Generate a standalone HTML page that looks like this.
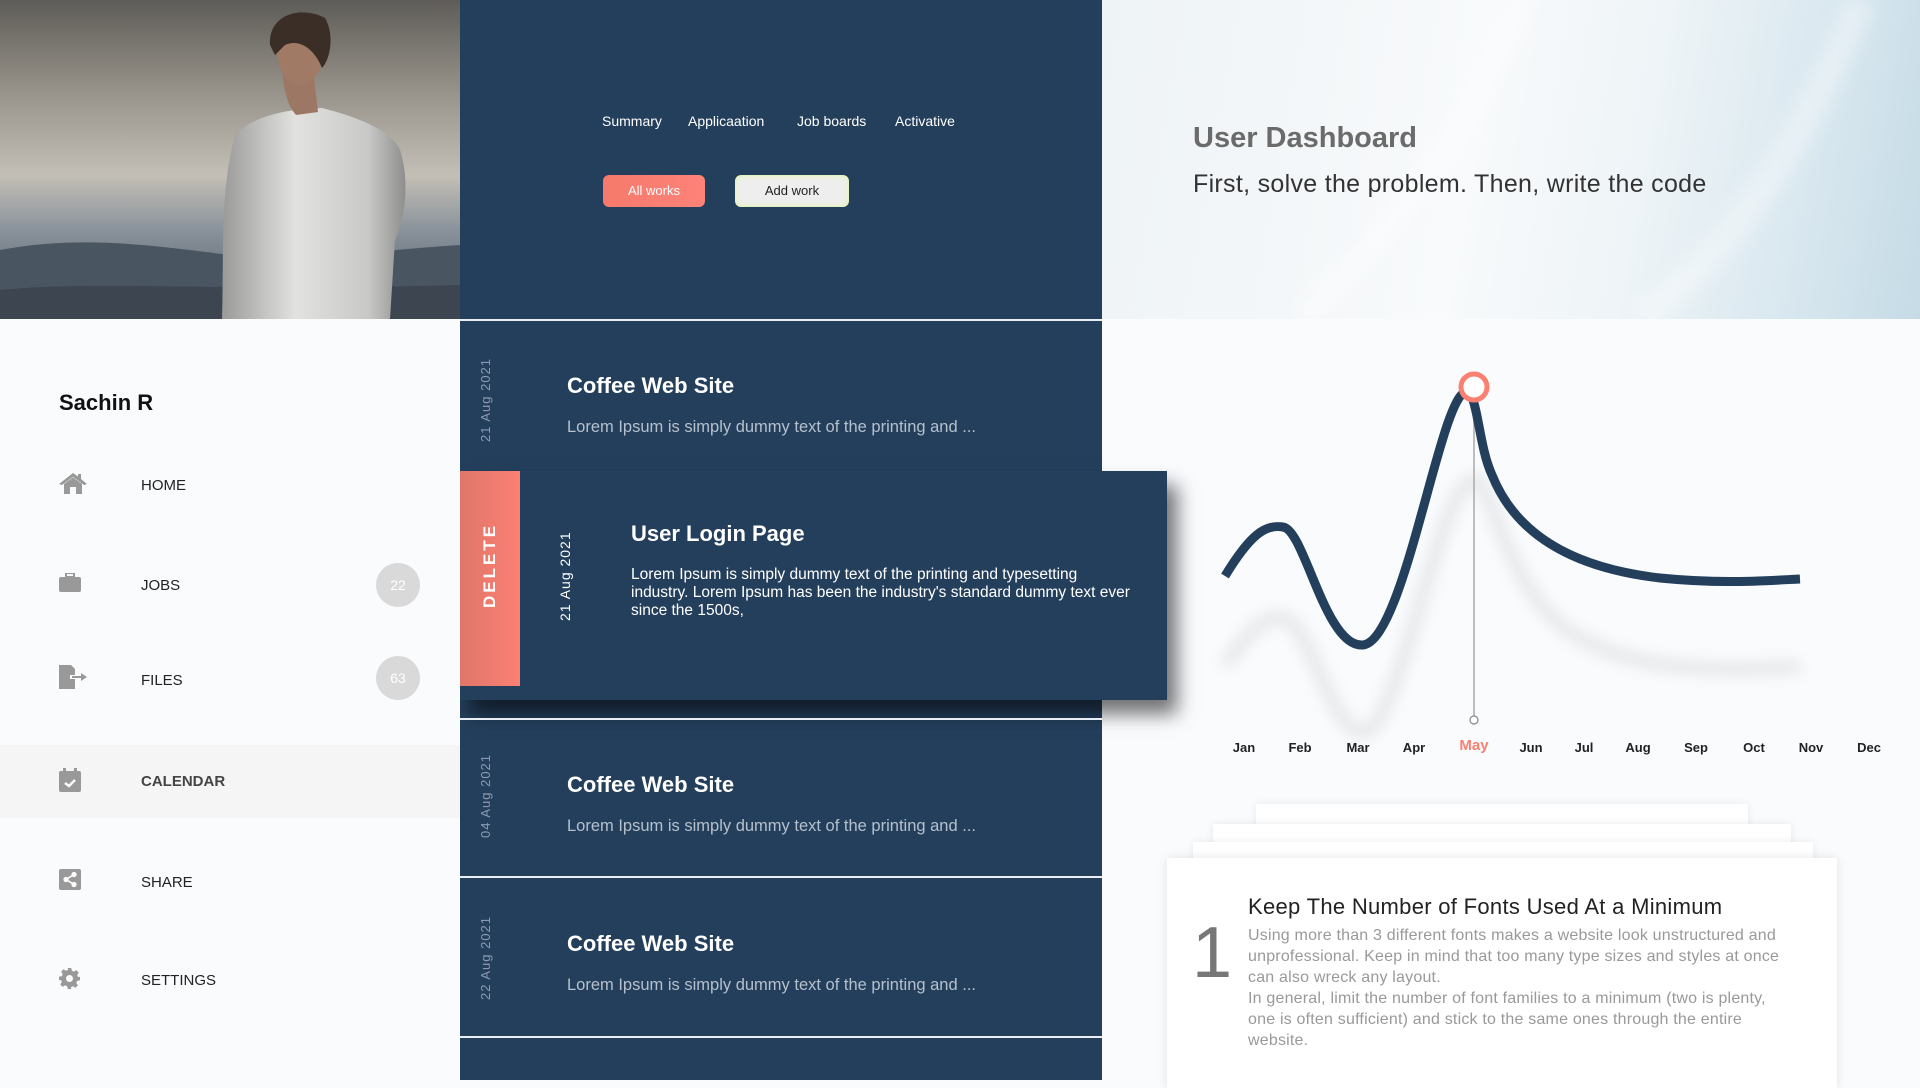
<!DOCTYPE html>
<html><head><meta charset="utf-8"><style>
*{margin:0;padding:0;box-sizing:border-box}
body{width:1920px;height:1080px;overflow:hidden;position:relative;font-family:"Liberation Sans",sans-serif;background:#f9fbfd}
.abs{position:absolute}
.dark{left:460px;top:0;width:642px;height:1080px;background:#243f5c}
.nav{top:113px;font-size:14px;color:#fff}
.sep{left:460px;width:642px;height:2px;background:#e8eef4}
.date{transform:rotate(-90deg);transform-origin:left top;color:#8a9ab0;font-size:13px;letter-spacing:1px;white-space:nowrap}
.title{color:#fff;font-weight:bold;font-size:22px}
.desc{color:#b5c0cc;font-size:16.5px}
.menu{left:141px;font-size:15px;color:#222}
.ic{left:59px}
.badge{width:44px;height:44px;border-radius:50%;background:#d9d9d9;color:#fff;font-size:14px;text-align:center;line-height:44px;left:376px}
.mon{top:740px;font-size:13px;font-weight:bold;color:#222;transform:translateX(-50%)}
</style></head><body>
<!-- photo -->
<svg class="abs" style="left:0;top:0" width="460" height="319" viewBox="0 0 460 319">
<defs><linearGradient id="sky" x1="0" y1="0" x2="0" y2="1"><stop offset="0" stop-color="#5e5c58"/><stop offset=".3" stop-color="#9a958c"/><stop offset=".55" stop-color="#c4bfb6"/><stop offset=".72" stop-color="#8a939b"/><stop offset="1" stop-color="#4d5866"/></linearGradient>
<linearGradient id="sh" x1="0" y1="0" x2="1" y2="0"><stop offset="0" stop-color="#9a9a98"/><stop offset=".4" stop-color="#e2e2e0"/><stop offset=".8" stop-color="#c8c8c6"/><stop offset="1" stop-color="#8e8e8c"/></linearGradient></defs>
<rect width="460" height="319" fill="url(#sky)"/>
<path d="M0 250 C80 235 150 245 230 255 C300 262 380 250 460 245 L460 319 L0 319Z" fill="#4a5562"/>
<path d="M0 290 C100 280 200 292 460 285 L460 319 L0 319Z" fill="#3c4550"/>
<path d="M235 135 C250 118 280 112 295 110 L322 108 C350 115 390 128 400 150 C410 180 405 220 395 240 L390 319 L222 319 C224 250 220 190 235 135Z" fill="url(#sh)"/>
<path d="M282 70 C284 92 288 106 296 115 L318 112 L314 78Z" fill="#9c7864"/>
<ellipse cx="300" cy="55" rx="22" ry="30" fill="#a07a64"/>
<path d="M270 45 C268 15 300 5 325 18 C335 35 330 60 322 68 C315 50 300 38 285 45 L275 55Z" fill="#3a2e26"/>
</svg>
<!-- dark panel -->
<div class="abs dark"></div>
<div class="abs nav" style="left:602px">Summary</div>
<div class="abs nav" style="left:688px">Applicaation</div>
<div class="abs nav" style="left:797px">Job boards</div>
<div class="abs nav" style="left:895px">Activative</div>
<div class="abs" style="left:603px;top:175px;width:102px;height:32px;border-radius:6px;background:linear-gradient(90deg,#f57a6c,#fe8278);color:#fff;font-size:13px;text-align:center;line-height:32px">All works</div>
<div class="abs" style="left:735px;top:175px;width:114px;height:32px;border-radius:6px;background:#eeeeee;box-shadow:inset 0 0 6px #e2f5b5;border:1px solid #e4f3c4;color:#222;font-size:13px;text-align:center;line-height:30px">Add work</div>
<div class="abs sep" style="top:319px"></div>
<!-- item1 -->
<div class="abs date" style="left:478px;top:442px">21 Aug 2021</div>
<div class="abs title" style="left:567px;top:373px">Coffee Web Site</div>
<div class="abs desc" style="left:567px;top:418px">Lorem Ipsum is simply dummy text of the printing and ...</div>
<!-- expanded -->
<div class="abs" style="left:460px;top:471px;width:707px;height:229px;box-shadow:10px 14px 18px rgba(0,0,0,.55)"></div>
<div class="abs" style="left:460px;top:471px;width:60px;height:215px;background:linear-gradient(90deg,#e0766a,#fb8073)"></div>
<div class="abs" style="left:480px;top:608px;transform:rotate(-90deg);transform-origin:left top;color:#fff;font-size:17px;letter-spacing:3px;font-weight:bold">DELETE</div>
<div class="abs" style="left:520px;top:471px;width:647px;height:229px;background:#243f5c"></div>
<div class="abs date" style="left:557px;top:621px;color:#fff;font-size:14px">21 Aug 2021</div>
<div class="abs title" style="left:631px;top:521px">User Login Page</div>
<div class="abs" style="left:631px;top:566px;width:505px;color:#fff;font-size:15.5px;line-height:18px">Lorem Ipsum is simply dummy text of the printing and typesetting industry. Lorem Ipsum has been the industry's standard dummy text ever since the 1500s,</div>
<div class="abs sep" style="top:718px"></div>
<!-- item3 -->
<div class="abs date" style="left:478px;top:838px">04 Aug 2021</div>
<div class="abs title" style="left:567px;top:772px">Coffee Web Site</div>
<div class="abs desc" style="left:567px;top:817px">Lorem Ipsum is simply dummy text of the printing and ...</div>
<div class="abs sep" style="top:876px"></div>
<!-- item4 -->
<div class="abs date" style="left:478px;top:1000px">22 Aug 2021</div>
<div class="abs title" style="left:567px;top:931px">Coffee Web Site</div>
<div class="abs desc" style="left:567px;top:976px">Lorem Ipsum is simply dummy text of the printing and ...</div>
<div class="abs sep" style="top:1036px"></div>
<!-- sidebar -->
<div class="abs" style="left:0;top:319px;width:460px;height:761px;background:#fafbfd"></div>
<div class="abs" style="left:0;top:745px;width:460px;height:73px;background:#f5f5f5"></div>
<div class="abs" style="left:59px;top:390px;font-size:22px;font-weight:bold;color:#111">Sachin R</div>
<svg class="abs ic" style="top:472px" width="28" height="22" viewBox="0 0 28 22"><path d="M14 1 L0 12 L3 13 L14 5 L25 13 L28 12 L22 7 V2 H19 V4.5Z" fill="#999"/><path d="M5 12 L14 5.5 L23 12 V22 H17 V15 H11 V22 H5Z" fill="#999"/></svg>
<div class="abs menu" style="top:477px">HOME</div>
<svg class="abs ic" style="top:573px" width="22" height="20" viewBox="0 0 22 20"><rect x="7" y="0" width="8" height="4" fill="none" stroke="#999" stroke-width="2"/><rect x="0" y="4" width="22" height="15" rx="2" fill="#999"/></svg>
<div class="abs menu" style="top:577px">JOBS</div>
<div class="abs badge" style="top:563px">22</div>
<svg class="abs ic" style="top:665px" width="28" height="24" viewBox="0 0 28 24"><path d="M0 0 H12 L16 4 V10 H11 V14 H16 V24 H0Z" fill="#999"/><path d="M13 11 H22 V8 L28 12 L22 16 V13 H13Z" fill="#999"/></svg>
<div class="abs menu" style="top:672px">FILES</div>
<div class="abs badge" style="top:656px">63</div>
<svg class="abs ic" style="top:768px" width="22" height="24" viewBox="0 0 22 24"><rect x="0" y="3" width="22" height="21" rx="2" fill="#999"/><rect x="4" y="0" width="3" height="5" fill="#999"/><rect x="15" y="0" width="3" height="5" fill="#999"/><path d="M6 15 L10 18 L16 12" stroke="#fafbfd" stroke-width="2.5" fill="none"/></svg>
<div class="abs menu" style="top:773px;font-weight:bold;color:#444">CALENDAR</div>
<svg class="abs ic" style="top:869px" width="22" height="21" viewBox="0 0 22 21"><rect width="22" height="21" rx="2" fill="#999"/><circle cx="15" cy="5.5" r="2.6" fill="#fff"/><circle cx="15" cy="15.5" r="2.6" fill="#fff"/><circle cx="7" cy="10.5" r="2.6" fill="#fff"/><path d="M15 5.5 L7 10.5 L15 15.5" stroke="#fff" stroke-width="1.6" fill="none"/></svg>
<div class="abs menu" style="top:874px">SHARE</div>
<svg class="abs ic" style="top:968px" width="21" height="21" viewBox="0 0 24 24"><path d="M10 0h4l.7 3.2 2.3 1 2.8-1.8 2.8 2.8-1.8 2.8 1 2.3L24 10v4l-3.2.7-1 2.3 1.8 2.8-2.8 2.8-2.8-1.8-2.3 1L14 24h-4l-.7-3.2-2.3-1-2.8 1.8-2.8-2.8 1.8-2.8-1-2.3L0 14v-4l3.2-.7 1-2.3L2.4 4.2 5.2 1.4 8 3.2l2.3-1z" fill="#999"/><circle cx="12" cy="12" r="4" fill="#fafbfd"/></svg>
<div class="abs menu" style="top:972px">SETTINGS</div>
<!-- hero -->
<div class="abs" style="left:1102px;top:0;width:818px;height:319px;background:linear-gradient(100deg,#eef3f6 0%,#f8fafb 45%,#eef4f7 65%,#d8e7ef 85%,#c5dbe6 100%)"></div>
<svg class="abs" style="left:1102px;top:0" width="818" height="319"><defs><filter id="hb"><feGaussianBlur stdDeviation="8"/></filter></defs><path d="M420 0 C380 100 320 200 200 319" stroke="#fff" stroke-opacity=".35" stroke-width="24" fill="none" filter="url(#hb)"/><path d="M760 0 C700 140 640 240 540 319" stroke="#fff" stroke-opacity=".35" stroke-width="30" fill="none" filter="url(#hb)"/></svg>
<div class="abs" style="left:1193px;top:122px;font-size:29px;font-weight:bold;color:#6b6b6b">User Dashboard</div>
<div class="abs" style="left:1193px;top:170px;font-size:25px;color:#333;letter-spacing:.3px">First, solve the problem. Then, write the code</div>
<!-- chart -->
<svg class="abs" style="left:0;top:0" width="1920" height="1080">
<defs><filter id="bl"><feGaussianBlur stdDeviation="7"/></filter></defs>
<path d="M1225,665 C1250,630 1265,615 1283,618 C1310,622 1330,730 1363,733 C1400,730 1440,480 1474,480 C1492,480 1500,570 1560,625 C1620,670 1700,672 1800,667" stroke="#e6e8ea" stroke-width="14" fill="none" filter="url(#bl)"/>
<line x1="1474" y1="395" x2="1474" y2="716" stroke="#aaa" stroke-width="1.5"/>
<circle cx="1474" cy="720" r="4" fill="#fff" stroke="#888" stroke-width="1.2"/>
<path d="M1225,576 C1250,535 1265,524 1283,527 C1305,530 1325,648 1363,645 C1405,640 1440,395 1466,392 C1478,392 1478,445 1492,475 C1520,545 1590,570 1660,578 C1720,584 1760,581 1800,579" stroke="#243f5c" stroke-width="9" fill="none"/>
<circle cx="1474" cy="387" r="13" fill="#fff" stroke="#fa8072" stroke-width="5"/>
</svg>
<div class="abs mon" style="left:1244px">Jan</div>
<div class="abs mon" style="left:1300px">Feb</div>
<div class="abs mon" style="left:1358px">Mar</div>
<div class="abs mon" style="left:1414px">Apr</div>
<div class="abs mon" style="left:1474px;top:737px;color:#fa8072;font-size:15px">May</div>
<div class="abs mon" style="left:1531px">Jun</div>
<div class="abs mon" style="left:1584px">Jul</div>
<div class="abs mon" style="left:1638px">Aug</div>
<div class="abs mon" style="left:1696px">Sep</div>
<div class="abs mon" style="left:1754px">Oct</div>
<div class="abs mon" style="left:1811px">Nov</div>
<div class="abs mon" style="left:1869px">Dec</div>
<!-- cards -->
<div class="abs" style="left:1256px;top:804px;width:492px;height:60px;background:#fff;box-shadow:0 0 8px rgba(0,0,0,.08)"></div>
<div class="abs" style="left:1213px;top:824px;width:578px;height:60px;background:#fff;box-shadow:0 0 8px rgba(0,0,0,.08)"></div>
<div class="abs" style="left:1193px;top:842px;width:620px;height:60px;background:#fff;box-shadow:0 0 8px rgba(0,0,0,.08)"></div>
<div class="abs" style="left:1167px;top:858px;width:670px;height:230px;background:#fff;box-shadow:0 0 10px rgba(0,0,0,.1)"></div>
<div class="abs" style="left:1192px;top:917px;font-size:72px;color:#777;line-height:1">1</div>
<div class="abs" style="left:1248px;top:894px;font-size:22px;color:#222;letter-spacing:.3px">Keep The Number of Fonts Used At a Minimum</div>
<div class="abs" style="left:1248px;top:925px;width:548px;font-size:16px;line-height:21px;color:#999;letter-spacing:.2px">Using more than 3 different fonts makes a website look unstructured and unprofessional. Keep in mind that too many type sizes and styles at once can also wreck any layout.<br>In general, limit the number of font families to a minimum (two is plenty, one is often sufficient) and stick to the same ones through the entire website.</div>
</body></html>
